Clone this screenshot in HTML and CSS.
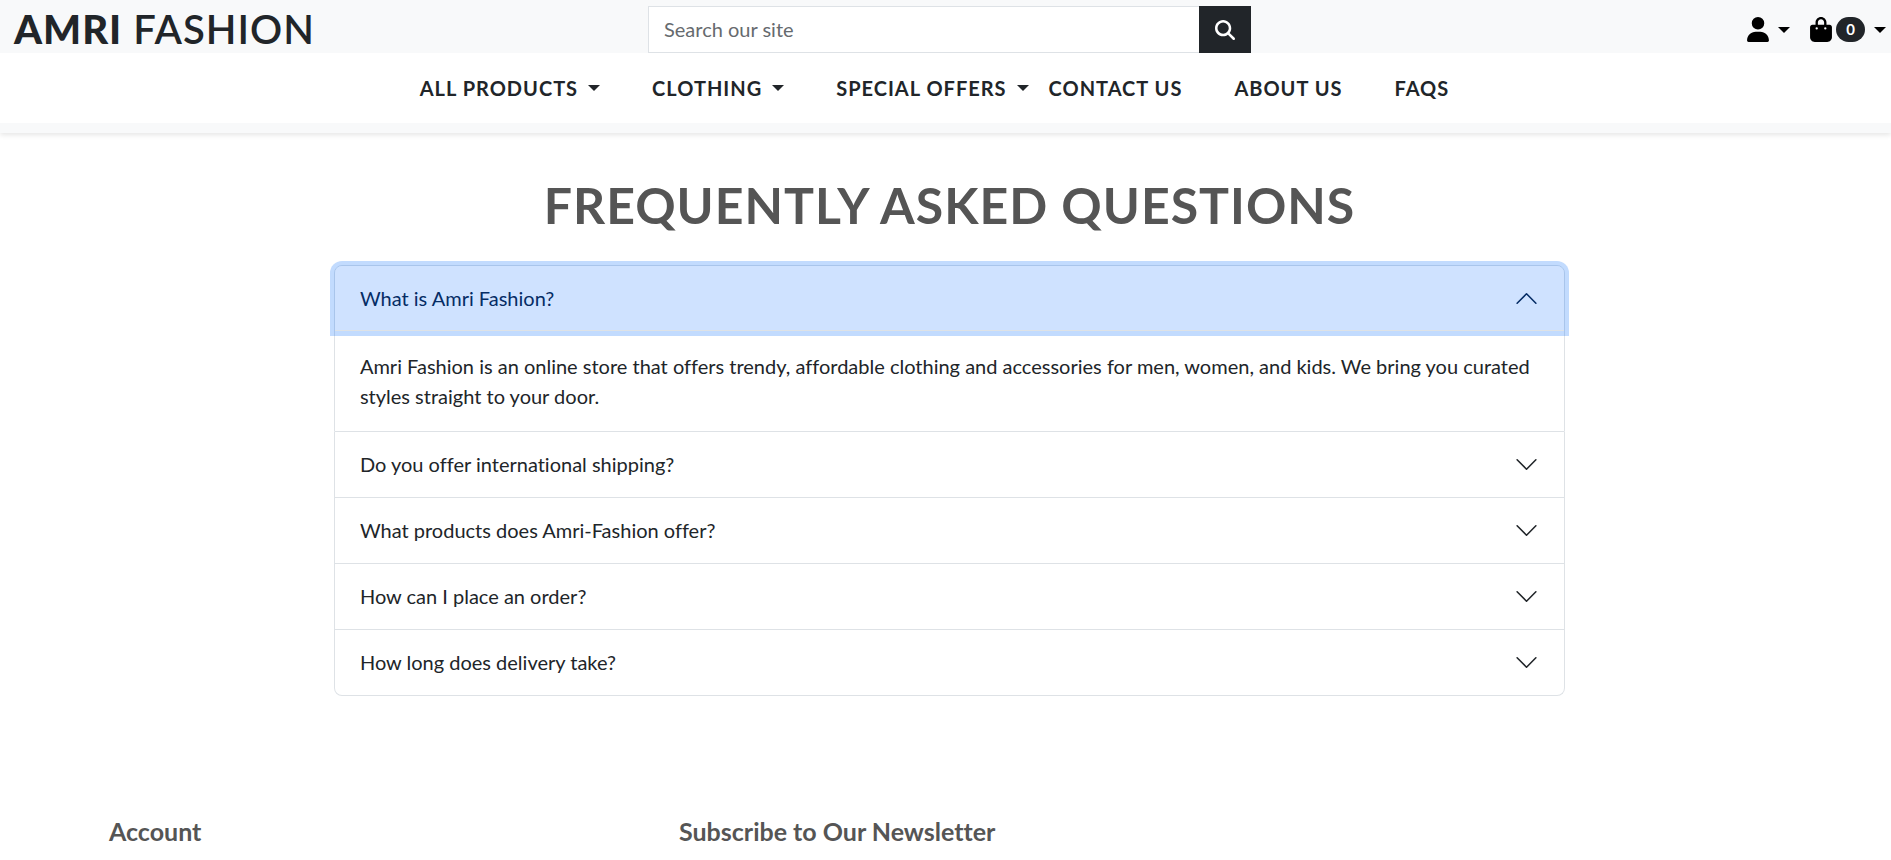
FILE: index.html
```html
<!DOCTYPE html>
<html lang="en">
<head>
<meta charset="utf-8">
<meta name="viewport" content="width=device-width, initial-scale=1">
<title>Amri Fashion – FAQs</title>
<link rel="stylesheet" href="styles.css">
</head>
<body>
<header class="site-header">
  <div class="topbar">
    <a class="logo" href="#"><strong>AMRI</strong> FASHION</a>
    <form class="search" role="search">
      <input class="search-input" type="text" placeholder="Search our site" aria-label="Search our site">
      <button class="search-button" type="button" aria-label="Search">
        <svg viewBox="0 0 512 512" width="20" height="20" fill="currentColor" aria-hidden="true"><path d="M416 208c0 45.9-14.9 88.3-40 122.7L502.6 457.4c12.5 12.5 12.5 32.8 0 45.3s-32.8 12.5-45.3 0L330.7 376c-34.4 25.2-76.8 40-122.7 40C93.1 416 0 322.9 0 208S93.1 0 208 0S416 93.1 416 208zM208 352a144 144 0 1 0 0-288 144 144 0 1 0 0 288z"/></svg>
      </button>
    </form>
    <div class="account-links">
      <button class="icon-button" type="button" aria-label="My account">
        <svg class="icon" viewBox="0 0 448 512" fill="currentColor" aria-hidden="true"><path d="M224 256A128 128 0 1 0 224 0a128 128 0 1 0 0 256zm-45.7 48C79.8 304 0 383.8 0 482.3C0 498.7 13.3 512 29.7 512H418.3c16.4 0 29.7-13.3 29.7-29.7C448 383.8 368.2 304 269.7 304H178.3z"/></svg>
        <span class="caret"></span>
      </button>
      <button class="icon-button" type="button" aria-label="Shopping bag, 0 items">
        <svg class="icon" viewBox="0 0 448 512" fill="currentColor" aria-hidden="true"><path d="M160 112c0-35.3 28.7-64 64-64s64 28.7 64 64v48H160V112zm-48 48H48c-26.5 0-48 21.5-48 48V416c0 53 43 96 96 96H352c53 0 96-43 96-96V208c0-26.5-21.5-48-48-48H336V112C336 50.1 285.9 0 224 0S112 50.1 112 112v48zm24 48a24 24 0 1 1 0 48 24 24 0 1 1 0-48zm152 24a24 24 0 1 1 48 0 24 24 0 1 1 -48 0z"/></svg>
        <span class="badge">0</span>
        <span class="caret"></span>
      </button>
    </div>
  </div>
  <nav class="main-nav" aria-label="Main">
    <div class="nav-group">
      <button class="nav-item" type="button">ALL PRODUCTS<span class="caret"></span></button>
      <button class="nav-item" type="button">CLOTHING<span class="caret"></span></button>
      <button class="nav-item" type="button">SPECIAL OFFERS<span class="caret"></span></button>
    </div>
    <div class="nav-group">
      <a class="nav-item" href="#">CONTACT US</a>
      <a class="nav-item" href="#">ABOUT US</a>
      <a class="nav-item" href="#">FAQS</a>
    </div>
  </nav>
</header>

<main class="faq">
  <h1 class="faq-title">FREQUENTLY ASKED QUESTIONS</h1>
  <div class="accordion">
    <section class="accordion-item">
      <button class="accordion-button open" type="button" aria-expanded="true" aria-controls="answer-1">What is Amri Fashion?
        <svg class="chevron" viewBox="0 0 16 16" fill="none" stroke="currentColor" stroke-linecap="round" stroke-linejoin="round" aria-hidden="true"><path d="M2 5l6 6 6-6"/></svg>
      </button>
      <p class="answer" id="answer-1">Amri Fashion is an online store that offers trendy, affordable clothing and accessories for men, women, and kids. We bring you curated styles straight to your door.</p>
    </section>
    <section class="accordion-item">
      <button class="accordion-button" type="button" aria-expanded="false">Do you offer international shipping?
        <svg class="chevron" viewBox="0 0 16 16" fill="none" stroke="currentColor" stroke-linecap="round" stroke-linejoin="round" aria-hidden="true"><path d="M2 5l6 6 6-6"/></svg>
      </button>
    </section>
    <section class="accordion-item">
      <button class="accordion-button" type="button" aria-expanded="false">What products does Amri-Fashion offer?
        <svg class="chevron" viewBox="0 0 16 16" fill="none" stroke="currentColor" stroke-linecap="round" stroke-linejoin="round" aria-hidden="true"><path d="M2 5l6 6 6-6"/></svg>
      </button>
    </section>
    <section class="accordion-item">
      <button class="accordion-button" type="button" aria-expanded="false">How can I place an order?
        <svg class="chevron" viewBox="0 0 16 16" fill="none" stroke="currentColor" stroke-linecap="round" stroke-linejoin="round" aria-hidden="true"><path d="M2 5l6 6 6-6"/></svg>
      </button>
    </section>
    <section class="accordion-item">
      <button class="accordion-button" type="button" aria-expanded="false">How long does delivery take?
        <svg class="chevron" viewBox="0 0 16 16" fill="none" stroke="currentColor" stroke-linecap="round" stroke-linejoin="round" aria-hidden="true"><path d="M2 5l6 6 6-6"/></svg>
      </button>
    </section>
  </div>
</main>

<footer class="site-footer">
  <h2 class="footer-title">Account</h2>
  <h2 class="footer-title">Subscribe to Our Newsletter</h2>
</footer>
</body>
</html>
```

FILE: styles.css
```css
* {
  box-sizing: border-box;
}

body {
  margin: 0;
  background: #fff;
  color: #212529;
  font: 400 20px/30px Lato, "Liberation Sans", sans-serif;
  font-variant-ligatures: none;
}

button,
input {
  margin: 0;
  font: inherit;
  color: inherit;
}

button {
  padding: 0;
  border: 0;
  background: none;
  cursor: pointer;
}

a {
  color: inherit;
  text-decoration: none;
}

.site-header {
  padding-bottom: 10px;
  background: #f8f9fa;
  box-shadow: 0 2px 5px rgba(0, 0, 0, 0.1);
}

.topbar {
  display: grid;
  grid-template-columns: 634fr 603fr 635fr;
  padding: 6px 5px 0 14px;
}

.logo {
  font-family: "Lato Semibold", Lato, "Liberation Sans", sans-serif;
  font-size: 40px;
  line-height: 46px;
  font-weight: 600;
  letter-spacing: 1px;
}

.logo strong {
  font-family: "Lato Black", Lato, "Liberation Sans", sans-serif;
  font-weight: 900;
}

.search {
  display: flex;
}

.search-input {
  flex: 1;
  min-width: 0;
  height: 47px;
  padding: 0 15px 2px;
  border: 1px solid #dee2e6;
  border-right: 0;
  border-radius: 0;
  background: #fff;
}

.search-input::placeholder {
  color: #666a6e;
  opacity: 1;
}

.search-button {
  display: grid;
  place-items: center;
  width: 52px;
  background: #212529;
  color: #fff;
}

.account-links {
  display: flex;
  justify-content: flex-end;
  gap: 20px;
}

.icon-button {
  display: flex;
  align-items: center;
  gap: 4px;
  color: #000;
}

.icon {
  width: 22px;
  height: 25px;
}

.badge {
  padding: 0 10px;
  border-radius: 13px;
  background: #212529;
  color: #fff;
  font-size: 15px;
  font-weight: 700;
  line-height: 25px;
}

.caret {
  display: inline-block;
  margin-left: 5px;
  border: 6px solid transparent;
  border-top-color: currentColor;
  border-bottom: 0;
}

.main-nav {
  display: flex;
  justify-content: center;
  gap: 20px;
  padding: 20px 22px 20px 0;
  background: #fff;
}

.nav-group {
  display: flex;
  gap: 52px;
}

.nav-item {
  display: flex;
  align-items: center;
  font-weight: 700;
  letter-spacing: 1px;
}

.nav-item .caret {
  margin-left: 10px;
}

.faq {
  padding: 42px calc(17.5% - 5px) 0 calc(17.5% + 3px);
}

.faq-title {
  margin: 0 0 30px;
  color: #555;
  font-size: 50px;
  line-height: 60px;
  font-weight: 700;
  letter-spacing: 1px;
  text-align: center;
}

.accordion-item {
  border: 1px solid #dee2e6;
  border-top: 0;
}

.accordion-item:first-child {
  border-top: 1px solid #dee2e6;
  border-radius: 8px 8px 0 0;
}

.accordion-item:last-child {
  border-radius: 0 0 8px 8px;
}

.accordion-button {
  display: flex;
  align-items: center;
  justify-content: space-between;
  width: 100%;
  padding: 17px 25px 18px;
  text-align: left;
}

.accordion-button.open {
  border-radius: 7px 7px 0 0;
  background: #cfe2ff;
  color: #052c65;
  box-shadow: inset 0 -1px 0 #dee2e6, 0 0 0 5px rgba(13, 110, 253, 0.25);
}

.chevron {
  width: 25px;
  height: 25px;
}

.open .chevron {
  transform: rotate(180deg);
}

.answer {
  margin: 0;
  padding: 20px 25px;
}

.site-footer {
  display: grid;
  grid-template-columns: 1fr 2fr;
  padding: 120px 72px 20px 109px;
}

.footer-title {
  margin: 0;
  color: #555;
  font-size: 25px;
  line-height: 30px;
  font-weight: 700;
}
```
